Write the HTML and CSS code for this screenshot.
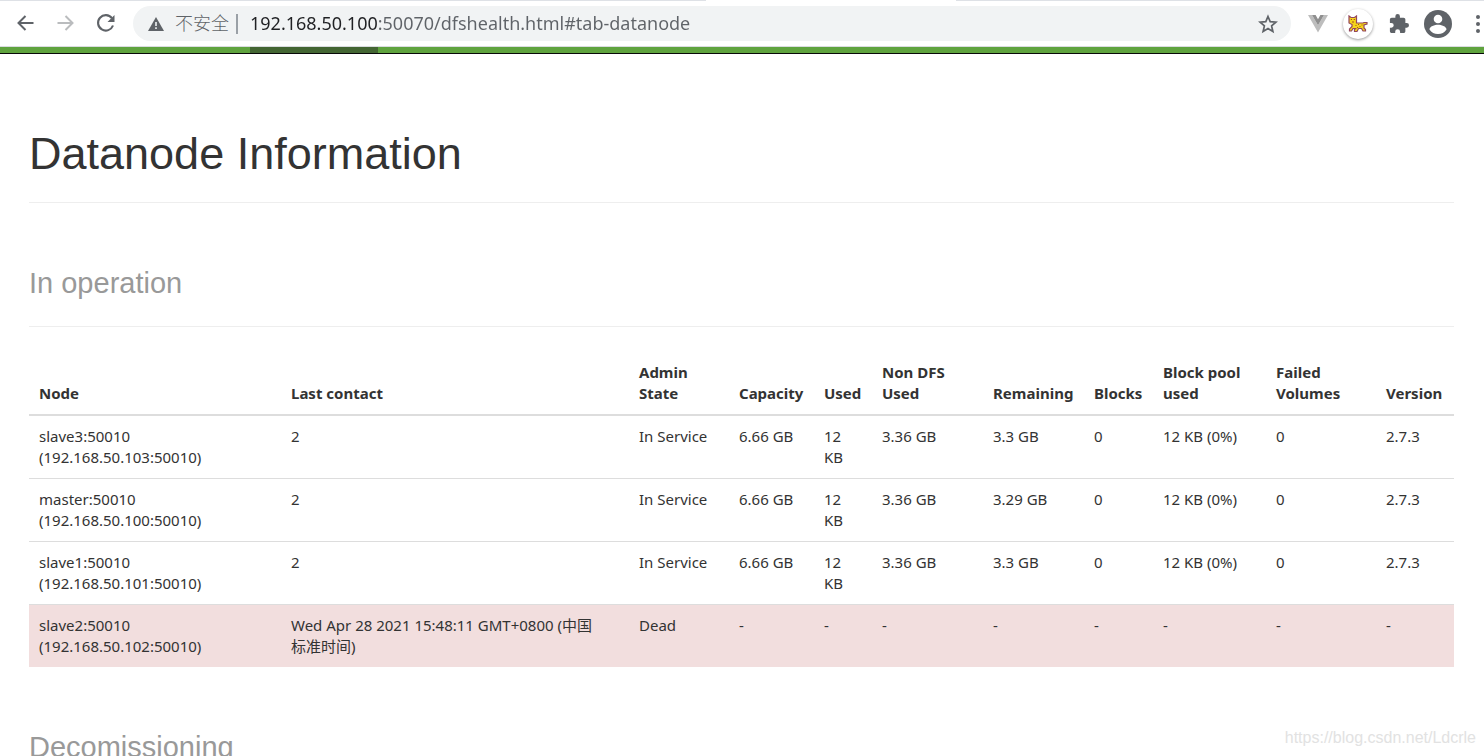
FILE: index.html
```html
<!DOCTYPE html>
<html lang="en">
<head>
<meta charset="utf-8">
<title>Namenode information</title>
<link rel="stylesheet" href="styles.css">
</head>
<body>
<header class="browser">
  <div class="tab-edge"><span></span><span></span><span></span></div>
  <div class="toolbar">
    <div class="nav-buttons">
      <button type="button" class="icon-button" aria-label="Back"><svg width="24" height="24" viewBox="0 0 24 24"><path d="M20.500 11H5M12.500 4L5.500 11l7 7" fill="none" stroke="#5f6368" stroke-width="2"/></svg></button>
      <button type="button" class="icon-button" aria-label="Forward"><svg width="24" height="24" viewBox="0 0 24 24"><path d="M4.500 11H20M12.500 4l7 7-7 7" fill="none" stroke="#babcbe" stroke-width="2"/></svg></button>
      <button type="button" class="icon-button" aria-label="Reload"><svg width="24" height="24" viewBox="0 0 24 24"><path d="M18.900 6.200A7.700 7.700 0 1 0 20 13.500" fill="none" stroke="#5f6368" stroke-width="2.100"/><path d="M21.500 3v7h-7z" fill="#5f6368"/></svg></button>
    </div>
    <div class="omnibox">
      <button type="button" class="site-info"><svg width="16" height="16" viewBox="0 0 16 16"><path d="M8 1L16 15H0z" fill="#5f6368"/><path d="M7.200 6h1.600v4H7.200zM7.200 11.300h1.600v1.700H7.200z" fill="#f1f3f4"/></svg><span>不安全</span></button>
      <span class="divider"></span>
      <input class="address" type="text" aria-label="Address" value="192.168.50.100:50070/dfshealth.html#tab-datanode">
      <button type="button" class="icon-button" aria-label="Bookmark"><svg width="20" height="20" viewBox="0 0 20 20"><path d="M10 2.500l2.200 5.200 5.700.5-4.300 3.700 1.300 5.600L10 14.500l-4.900 3 1.300-5.600-4.300-3.700 5.700-.5z" fill="none" stroke="#5f6368" stroke-width="1.700"/></svg></button>
    </div>
    <div class="extensions">
      <button type="button" class="icon-button" aria-label="Vue devtools"><svg width="20" height="18" viewBox="0 0 20 18"><path d="M0 0h4l6 10.300L16 0h4L10 17.500z" fill="#bdbdbd"/><path d="M4 0h3.600L10 4.200 12.400 0H16l-6 10.300z" fill="#8f8f8f"/></svg></button>
      <button type="button" class="icon-button cat" aria-label="Cat extension"><svg width="20" height="18" viewBox="0 0 20 18"><path d="M1 1l2 1.500h3.500L8.500 1v7H15l1-.5h3v1.500l-3 1v3l1.500 1.500V16H15l-1.500-2.500h-3L9 16.500H6.500v-2l1-1H5L3.500 16h-2v-2L4 11.500v-2L1 8z" fill="#f5d51a" stroke="#93465c" stroke-width="1.200"/><path d="M2.800 4.500h1.200M5.700 4.500h1.200M4 7h2M7.500 10.500h1M10 9.500h1M11.500 11.500h1M13.500 10h1M9 12.500h1" stroke="#a5501f" stroke-width="1.200"/></svg></button>
      <button type="button" class="icon-button" aria-label="Extensions"><svg width="20" height="20" viewBox="1 1 22 22"><path d="M20.500 11H19V7c0-1.100-.9-2-2-2h-4V3.500a2.500 2.500 0 0 0-5 0V5H4c-1.100 0-2 .9-2 2v3.800h1.500a2.700 2.700 0 0 1 0 5.400H2V20c0 1.100.9 2 2 2h3.800v-1.500a2.700 2.700 0 0 1 5.400 0V22H17c1.100 0 2-.9 2-2v-4h1.500a2.500 2.500 0 0 0 0-5z" fill="#5f6368"/></svg></button>
      <button type="button" class="icon-button" aria-label="Profile"><svg width="28" height="28" viewBox="0 0 28 28"><circle cx="14" cy="14" r="14" fill="#5f6368"/><circle cx="14" cy="9" r="4.300" fill="#fff"/><path d="M5.500 19.500c0-3.100 5.400-4.700 8.500-4.700s8.500 1.600 8.500 4.700A10.200 10.200 0 0 1 14 24a10.200 10.200 0 0 1-8.500-4.500z" fill="#fff"/></svg></button>
      <button type="button" class="icon-button" aria-label="Menu"><svg width="4" height="18" viewBox="0 0 4 18"><circle cx="2" cy="2" r="2" fill="#5f6368"/><circle cx="2" cy="9" r="2" fill="#5f6368"/><circle cx="2" cy="16" r="2" fill="#5f6368"/></svg></button>
    </div>
  </div>
</header>
<nav class="navbar" aria-label="Main"><a class="active" href="#tab-datanode" aria-label="Datanodes"></a></nav>
<main class="page">
  <h1>Datanode Information</h1>
  <h2>In operation</h2>
  <table>
    <colgroup><col class="c-node"><col class="c-contact"><col class="c-state"><col class="c-capacity"><col class="c-used"><col class="c-nondfs"><col class="c-remaining"><col class="c-blocks"><col class="c-pool"><col class="c-failed"><col class="c-version"></colgroup>
    <thead>
      <tr><th>Node</th><th>Last contact</th><th>Admin State</th><th>Capacity</th><th>Used</th><th>Non DFS Used</th><th>Remaining</th><th>Blocks</th><th>Block pool used</th><th>Failed Volumes</th><th>Version</th></tr>
    </thead>
    <tbody>
      <tr><td>slave3:50010 (192.168.50.103:50010)</td><td>2</td><td>In Service</td><td>6.66 GB</td><td>12 KB</td><td>3.36 GB</td><td>3.3 GB</td><td>0</td><td>12 KB (0%)</td><td>0</td><td>2.7.3</td></tr>
      <tr><td>master:50010 (192.168.50.100:50010)</td><td>2</td><td>In Service</td><td>6.66 GB</td><td>12 KB</td><td>3.36 GB</td><td>3.29 GB</td><td>0</td><td>12 KB (0%)</td><td>0</td><td>2.7.3</td></tr>
      <tr><td>slave1:50010 (192.168.50.101:50010)</td><td>2</td><td>In Service</td><td>6.66 GB</td><td>12 KB</td><td>3.36 GB</td><td>3.3 GB</td><td>0</td><td>12 KB (0%)</td><td>0</td><td>2.7.3</td></tr>
      <tr class="dead"><td>slave2:50010 (192.168.50.102:50010)</td><td>Wed Apr 28 2021 15:48:11 GMT+0800 (中国<span class="keep">标准时间)</span></td><td>Dead</td><td>-</td><td>-</td><td>-</td><td>-</td><td>-</td><td>-</td><td>-</td><td>-</td></tr>
    </tbody>
  </table>
  <h2>Decomissioning</h2>
</main>
<div class="watermark">https://blog.csdn.net/Ldcrle</div>
</body>
</html>
```
FILE: styles.css
```css
* { box-sizing: border-box; }

body {
  margin: 0;
  height: 100vh;
  overflow: hidden;
  background: #fff;
  color: #333;
  font: 15px/21px "Noto Sans", "Noto Sans CJK SC", sans-serif;
}

svg { display: block; }

button {
  padding: 0;
  border: 0;
  background: none;
  color: inherit;
  font: inherit;
}

.browser { border-bottom: 1px solid #dadce0; }

.tab-edge {
  display: grid;
  grid-template-columns: 706fr 250fr 528fr;
  height: 1px;
}

.tab-edge span { background: #dee1e6; }
.tab-edge span:nth-child(2) { background: #fff; }

.toolbar {
  display: flex;
  align-items: center;
  height: 45px;
  padding: 0 4px 0 13px;
}

.nav-buttons {
  display: flex;
  gap: 16px;
  margin-right: 16px;
}

.omnibox {
  display: flex;
  flex: 1;
  align-items: center;
  height: 35px;
  padding: 0 13px 0 15px;
  border-radius: 18px;
  background: #f1f3f4;
}

.site-info {
  display: flex;
  align-items: center;
  gap: 11px;
  color: #5f6368;
  font-size: 18px;
  font-weight: 300;
}

.divider {
  width: 2px;
  height: 20px;
  margin: 0 12px 0 7px;
  background: #9aa0a6;
}

.address {
  flex: 1;
  min-width: 0;
  padding: 0 0 2px;
  border: 0;
  outline: 0;
  color: #5f6368;
  font: 18px/24px "Noto Sans", sans-serif;
  background: linear-gradient(90deg, #202124 128px, #5f6368 128px) text;
  -webkit-text-fill-color: transparent;
}

.extensions {
  display: flex;
  align-items: center;
  margin-left: 17px;
}

.cat {
  display: grid;
  place-items: center;
  width: 30px;
  height: 30px;
  margin: 0 16px 0 15px;
  border-radius: 50%;
  background: #fff;
  box-shadow: 0 1px 3px #00000066;
}

.extensions .icon-button:nth-child(4) { margin: 0 24px 0 15px; }

.navbar {
  height: 7px;
  padding-left: 250px;
  border-bottom: 1px solid #080808;
  background: #5fa33e;
}

.active {
  display: block;
  width: 128px;
  height: 6px;
  background: #446633;
}

.page { padding: 75px 30px 0 29px; }

h1, h2 {
  margin: 0;
  border-bottom: 1px solid #eee;
  font-family: "Liberation Sans", Arial, sans-serif;
  font-weight: 400;
}

h1 {
  padding-bottom: 23px;
  font-size: 45px;
  line-height: 50px;
}

h2 {
  margin-top: 60px;
  padding-bottom: 23px;
  color: #999;
  font-size: 29px;
  line-height: 40px;
}

table {
  width: 100%;
  margin-top: 25px;
  border-collapse: collapse;
  table-layout: fixed;
}

th, td {
  padding: 10px;
  text-align: left;
  vertical-align: top;
}

th {
  border-bottom: 2px solid #ddd;
  vertical-align: bottom;
}

td { border-top: 1px solid #ddd; }

.keep { display: inline-block; }

.dead { background: #f2dede; }

.c-node { width: 252px; }
.c-contact { width: 348px; }
.c-state { width: 100px; }
.c-capacity { width: 85px; }
.c-used { width: 58px; }
.c-nondfs { width: 111px; }
.c-remaining { width: 101px; }
.c-blocks { width: 69px; }
.c-pool { width: 113px; }
.c-failed { width: 110px; }
.c-version { width: 78px; }

.watermark {
  position: absolute;
  right: 8px;
  bottom: 6px;
  color: #e2e2e2;
  font: 16px/24px "Liberation Sans", Arial, sans-serif;
}
```
